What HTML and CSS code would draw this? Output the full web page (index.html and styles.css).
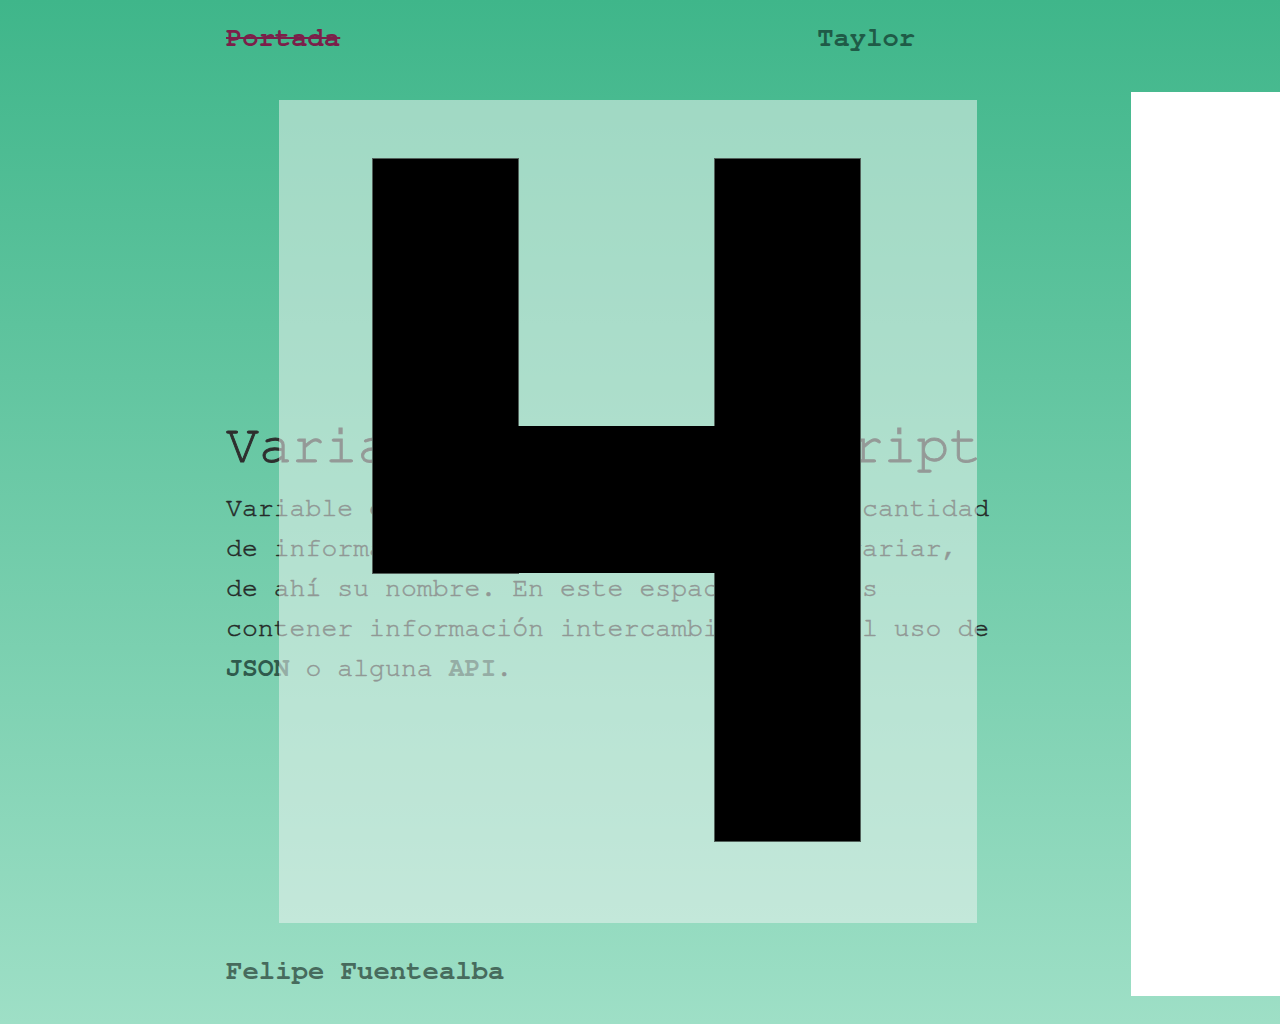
FILE: index.html
```html
<!DOCTYPE html>
<html lang="es">
<head>
<meta charset="utf-8">
<title>Variables en JavaScript</title>
<link rel="stylesheet" href="styles.css">
</head>
<body>
<div class="page">
  <div class="column">
    <header class="nav">
      <a class="nav-link nav-link--current" href="#">Portada</a>
      <a class="nav-link nav-link--author" href="#">Taylor</a>
    </header>
    <main class="content">
      <h1 class="title">Variables en JavaScript</h1>
      <p class="text">Variable es un espacio que almacena una cantidad de información que con el tiempo puede variar, de ahí su nombre. En este espacio podemos contener información intercambiada con el uso de <strong class="term">JSON</strong> o alguna <strong class="term">API</strong>.</p>
    </main>
    <footer class="foot">Felipe Fuentealba</footer>
  </div>
  <aside class="side"></aside>
</div>
<div class="overlay" aria-hidden="true">
  <svg class="figure" width="698" height="823" viewBox="0 0 698 823">
    <rect x="93.5" y="58.5" width="146" height="415" fill="#000" stroke="#52605a" stroke-width="1"/>
    <rect x="435.5" y="58.5" width="146" height="683" fill="#000" stroke="#52605a" stroke-width="1"/>
    <rect x="94" y="326" width="487" height="147" fill="#000"/>
  </svg>
</div>
</body>
</html>
```

FILE: styles.css
```css
html, body {
  margin: 0;
  padding: 0;
}

body {
  min-height: 1024px;
  background: linear-gradient(to bottom, #3fb68a 0%, #9edfc6 100%);
  font-family: "Nimbus Mono PS", "Nimbus Mono L", "FreeMono", "Courier", "Liberation Mono", monospace;
  color: #2b2b2b;
  position: relative;
}

.page {
  display: grid;
  grid-template-columns: 1fr 149px;
  min-height: 1024px;
}

.column {
  display: flex;
  flex-direction: column;
  padding-left: 226px;
}

.nav {
  display: flex;
  gap: 477px;
  padding-top: 18px;
  font-size: 27.2px;
  line-height: 40px;
  font-weight: bold;
}

.nav-link {
  text-decoration: none;
}

.nav-link--current {
  color: #7b1f4a;
  text-decoration: line-through;
}

.nav-link--author {
  color: #1f5b47;
}

.content {
  margin-top: 357px;
  width: 775px;
}

.title {
  margin: 0;
  font-size: 54.8px;
  line-height: 62px;
  font-weight: normal;
  color: #2e2e2e;
  -webkit-text-stroke: 0.9px #2e2e2e;
}

.text {
  margin: 11px 0 0;
  font-size: 26.5px;
  line-height: 40px;
  color: #252a28;
  -webkit-text-stroke: 0.5px #252a28;
}

.term {
  color: #2f5a4c;
  -webkit-text-stroke: 0;
}

.foot {
  margin-top: auto;
  padding-bottom: 33px;
  font-size: 27.3px;
  line-height: 40px;
  font-weight: bold;
  color: #476b5d;
}

.side {
  margin: 92px 0 28px;
  background: #ffffff;
}

.overlay {
  position: absolute;
  left: 279px;
  top: 100px;
  width: 698px;
  height: 823px;
  background: rgba(234, 242, 239, 0.55);
}

.figure {
  display: block;
}
```
